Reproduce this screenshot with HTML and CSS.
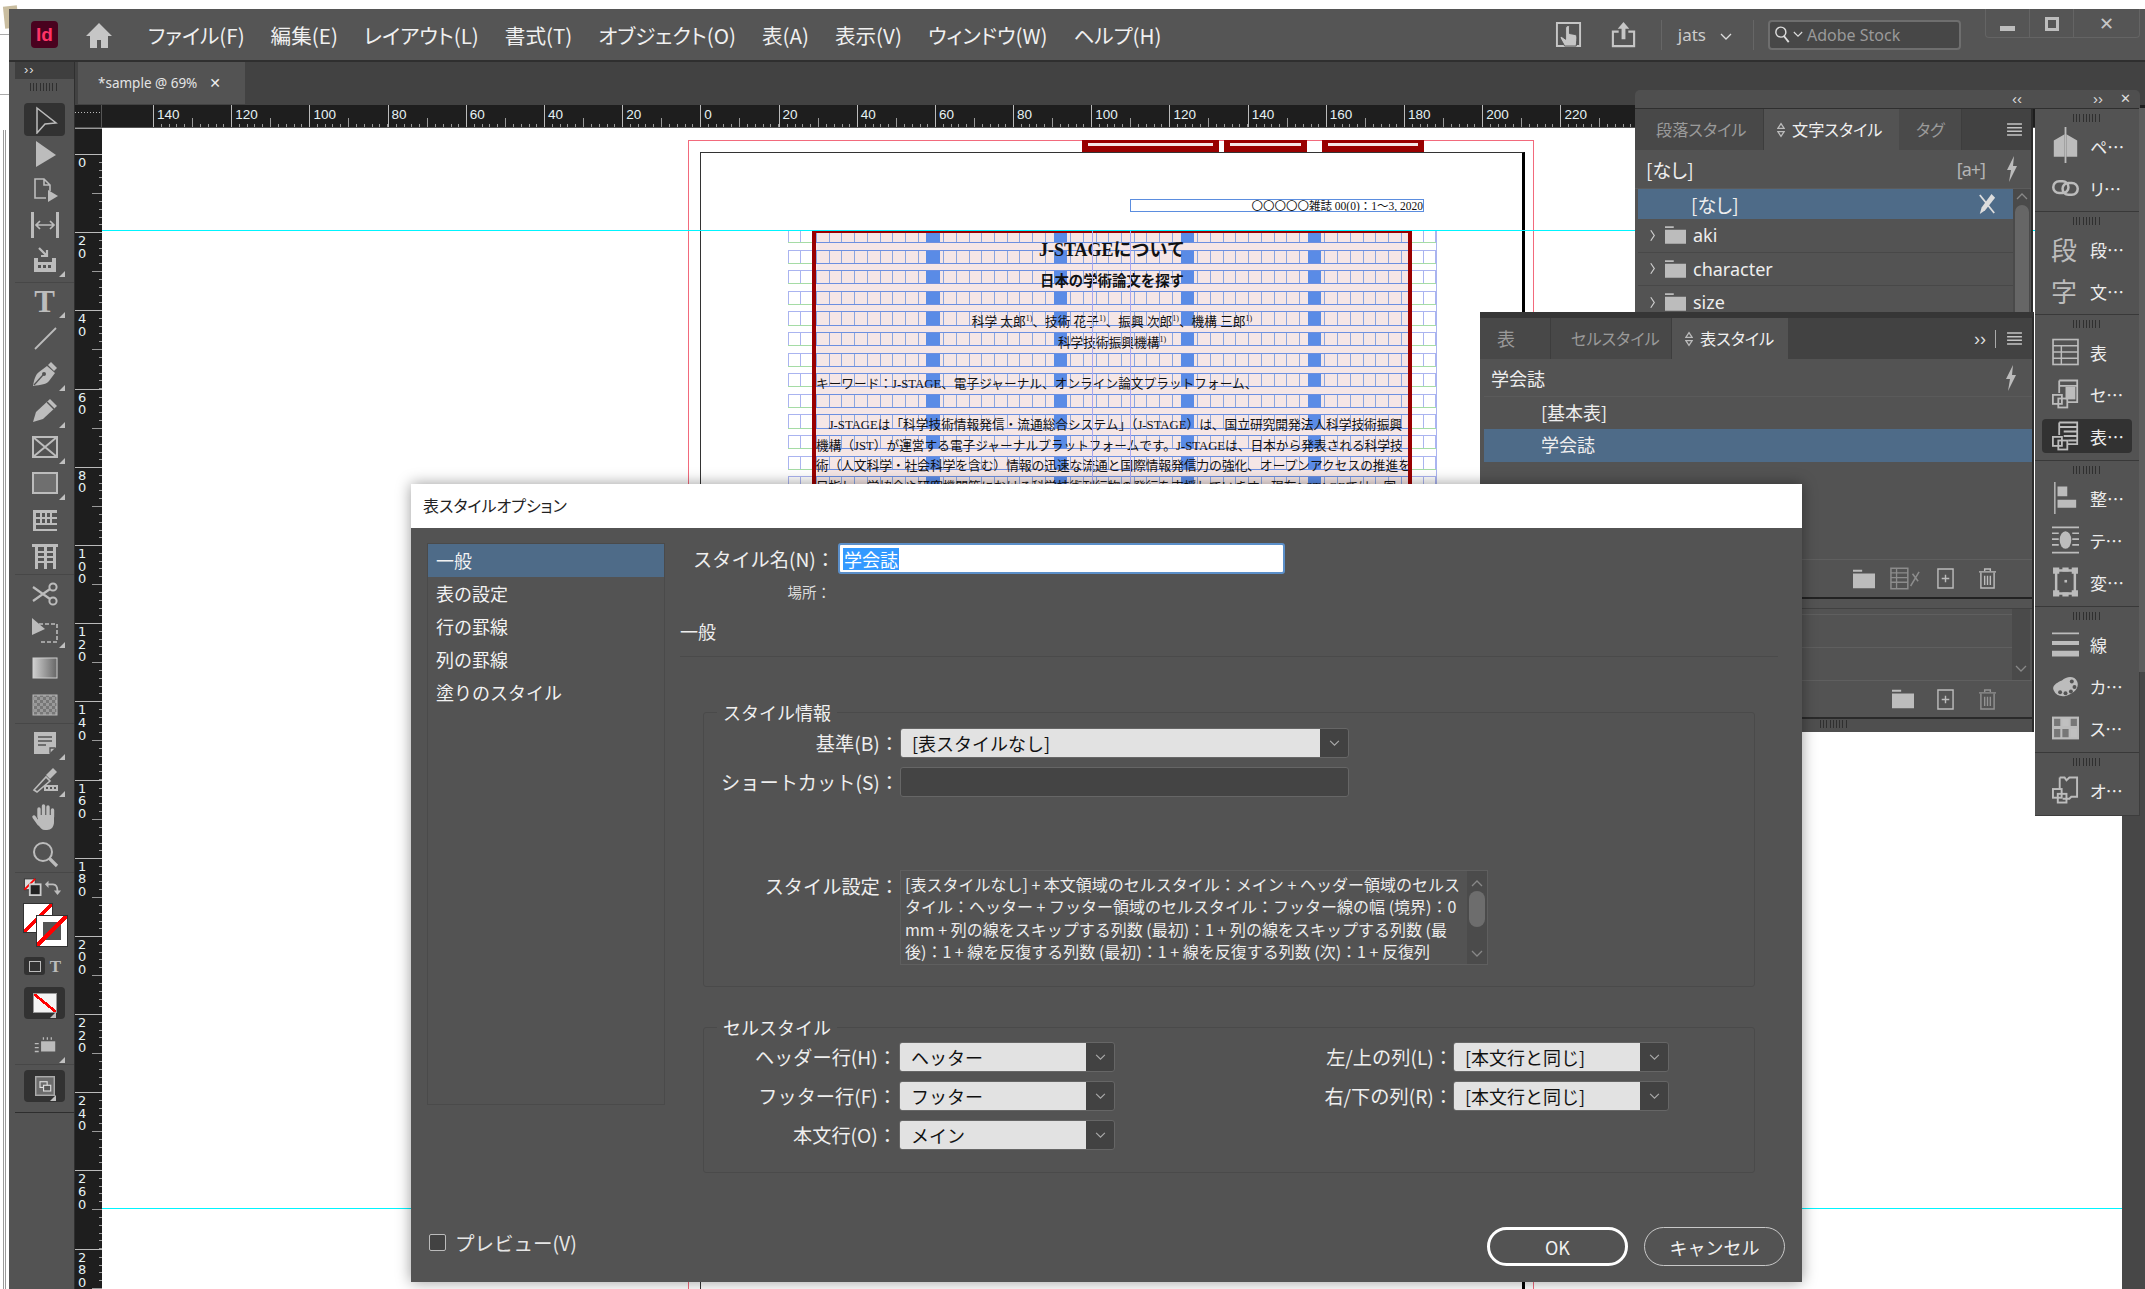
FILE: index.html
```html
<!DOCTYPE html>
<html lang="ja">
<head>
<meta charset="utf-8">
<title>表スタイルオプション</title>
<link rel="stylesheet" href="styles.css">
</head>
<body>
<svg class="sprite" xmlns="http://www.w3.org/2000/svg">
  <defs>
    <linearGradient id="grad"><stop offset="0" stop-color="#d0d0d0"/><stop offset="1" stop-color="#666"/></linearGradient>
    <pattern id="chk" width="6" height="6" patternUnits="userSpaceOnUse"><rect width="6" height="6" fill="#999"/><rect width="3" height="3" fill="#777"/><rect x="3" y="3" width="3" height="3" fill="#777"/></pattern>
  </defs>
  <symbol id="i-sel" viewBox="0 0 28 28"><path d="M6 2L25 17 14 18 6 27Z" fill="none" stroke="currentColor" stroke-width="1.5"/></symbol>
  <symbol id="i-dir" viewBox="0 0 28 28"><path d="M5 1L25 15 5 27Z" fill="currentColor"/></symbol>
  <symbol id="i-page" viewBox="0 0 28 28"><path d="M19 16v-6l-6-6H4v19h11M13 4v6h6" fill="none" stroke="currentColor" stroke-width="1.6"/><path d="M17 15l10 6-10 6z" fill="currentColor"/></symbol>
  <symbol id="i-gap" viewBox="0 0 28 28"><path d="M0 1h3v26H0zM25 1h3v26h-3z" fill="currentColor"/><path d="M5 14h18M9 10l-4 4 4 4M19 10l4 4-4 4" fill="none" stroke="currentColor" stroke-width="1.7"/></symbol>
  <symbol id="i-coll" viewBox="0 0 28 28"><path d="M3 12h4v4h14v-4h4v14H3z" fill="currentColor"/><path d="M7 19h3v3H7zM12 19h3v3h-3zM17 19h3v3h-3z" fill="#535353"/><path d="M8 2l8 8M10 10h6V4" fill="none" stroke="currentColor" stroke-width="2.2"/></symbol>
  <symbol id="i-line" viewBox="0 0 28 28"><path d="M4 25L25 4" stroke="currentColor" stroke-width="1.8"/></symbol>
  <symbol id="i-pen" viewBox="0 0 28 28"><path d="M2 26C3 19 5 14 8 12l8-6 8 7-6 8c-2 3-8 4-16 5z" fill="currentColor"/><path d="M17 5l3-3 6 6-3 3z" fill="currentColor"/><path d="M3 25l9-10" stroke="#535353" stroke-width="1.3"/><circle cx="13" cy="14" r="2" fill="#535353"/></symbol>
  <symbol id="i-pencil" viewBox="0 0 28 28"><path d="M2 26l3-10L19 3l7 7-14 13z" fill="currentColor"/><path d="M16 6l7 7" stroke="#535353" stroke-width="1.4"/></symbol>
  <symbol id="i-frame" viewBox="0 0 28 28"><path d="M2 4h24v20H2zM2 4l24 20M26 4L2 24" fill="none" stroke="currentColor" stroke-width="2"/></symbol>
  <symbol id="i-rect" viewBox="0 0 28 28"><rect x="2" y="4" width="24" height="20" fill="#6f6f6f" stroke="currentColor" stroke-width="2"/></symbol>
  <symbol id="i-tbl1" viewBox="0 0 28 28"><path d="M2 4h24v3H2zM2 11h24v2H2zM2 17h24v2H2zM2 23h24v2H2zM2 4h3v21H2z" fill="currentColor"/><path d="M10 7v4M15 7v4M20 7v4M10 13v4M15 13v4M20 13v4" stroke="currentColor" stroke-width="2"/></symbol>
  <symbol id="i-tbl2" viewBox="0 0 28 28"><path d="M1 2h26v3H1zM4 5h3v22H4zM13 5h3v22h-3zM22 5h3v22h-3z" fill="currentColor"/><path d="M7 10h6M7 15h6M7 20h6M16 10h6M16 15h6M16 20h6" stroke="currentColor" stroke-width="2"/></symbol>
  <symbol id="i-sciss" viewBox="0 0 28 28"><circle cx="22" cy="7" r="3.6" fill="none" stroke="currentColor" stroke-width="2"/><circle cx="22" cy="21" r="3.6" fill="none" stroke="currentColor" stroke-width="2"/><path d="M2 7l17 12M2 21L19 9" stroke="currentColor" stroke-width="2.2"/></symbol>
  <symbol id="i-free" viewBox="0 0 28 28"><path d="M1 1l13 11L1 18z" fill="currentColor"/><path d="M8 7h18v18H9" fill="none" stroke="currentColor" stroke-width="1.6" stroke-dasharray="4 2"/></symbol>
  <symbol id="i-grad" viewBox="0 0 28 28"><rect x="2" y="4" width="24" height="20" fill="url(#grad)" stroke="#cfcfcf" stroke-width="1"/></symbol>
  <symbol id="i-feath" viewBox="0 0 28 28"><rect x="2" y="4" width="24" height="20" fill="url(#chk)" stroke="#b5b5b5" stroke-width="1"/></symbol>
  <symbol id="i-note" viewBox="0 0 28 28"><path d="M3 3h22v15l-7 7H3z" fill="currentColor"/><path d="M7 8h14M7 12h14M7 16h8" stroke="#535353" stroke-width="1.6"/><path d="M19 24v-5h5" fill="none" stroke="#535353" stroke-width="1.3"/></symbol>
  <symbol id="i-drop" viewBox="0 0 28 28"><path d="M3 24L15 11l4 4L6 26z" fill="none" stroke="currentColor" stroke-width="1.6"/><path d="M15 9l7-7 4 4-7 7z" fill="currentColor"/><path d="M13 19h14v6H13z" fill="currentColor"/><path d="M15 21h2v2h-2zM19 21h2v2h-2zM23 21h2v2h-2z" fill="#535353"/></symbol>
  <symbol id="i-hand" viewBox="0 0 28 28"><path d="M8 14V6M12.5 12V3M17 12V4M21.5 14V7M3 14l5 7" fill="none" stroke="currentColor" stroke-width="3.4" stroke-linecap="round"/><path d="M7 12h16v7c0 5-3 8-7 8h-2c-3 0-5-2-7-6z" fill="currentColor"/></symbol>
  <symbol id="i-zoom" viewBox="0 0 28 28"><circle cx="12" cy="12" r="9" fill="none" stroke="currentColor" stroke-width="2"/><path d="M18 18l8 8" stroke="currentColor" stroke-width="3.2"/></symbol>
  <symbol id="i-swapc" viewBox="0 0 20 20"><rect x="1" y="1" width="12" height="12" fill="#ddd" stroke="#333"/><path d="M1 13L13 1" stroke="#f00" stroke-width="2"/><rect x="7" y="7" width="12" height="12" fill="#222" stroke="#ccc" stroke-width="2"/></symbol>
  <symbol id="i-swap" viewBox="0 0 20 20"><path d="M5 3l-4 4 4 4zM11 14l4 5 4-5z" fill="currentColor"/><path d="M4 7h6c4 0 5 3 5 8" fill="none" stroke="currentColor" stroke-width="2"/></symbol>
  <symbol id="i-bleed" viewBox="0 0 28 28"><rect x="9" y="8" width="18" height="13" fill="currentColor"/><path d="M12 3v3M17 3v3M22 3v3M1 11h5M1 16h5M1 21h5" stroke="currentColor" stroke-width="1.6"/></symbol>
  <symbol id="i-view" viewBox="0 0 28 28"><rect x="1" y="1" width="26" height="26" fill="#6c6c6c" stroke="#aaa" stroke-width="2"/><rect x="7" y="8" width="10" height="8" fill="none" stroke="#ddd" stroke-width="1.6"/><rect x="12" y="13" width="10" height="8" fill="#555" stroke="#ddd" stroke-width="1.6"/></symbol>
  <symbol id="i-home" viewBox="0 0 28 28"><path d="M14 2L1 15h4v12h7v-8h4v8h7V15h4z" fill="currentColor"/></symbol>
  <symbol id="i-hup" viewBox="0 0 28 28"><path d="M2 2h24v24H2z" fill="none" stroke="currentColor" stroke-width="2"/><path d="M12 6c0-2 3-2 3 0v7l6 1c2 1 2 3 1 12H10L5 17l2-1 4 3V6z" fill="currentColor" stroke="#535353" stroke-width="1"/></symbol>
  <symbol id="i-share" viewBox="0 0 28 28"><path d="M9 11H3v15h22V11h-6" fill="none" stroke="currentColor" stroke-width="2.2"/><path d="M14 1l6 7h-4v11h-4V8H8z" fill="currentColor"/></symbol>
  <symbol id="i-search" viewBox="0 0 28 28"><circle cx="11" cy="10" r="7" fill="none" stroke="currentColor" stroke-width="2"/><path d="M15 15l7 9" stroke="currentColor" stroke-width="2.6"/></symbol>
  <symbol id="i-chev" viewBox="0 0 12 8"><path d="M1 1l5 5 5-5" fill="none" stroke="currentColor" stroke-width="1.3"/></symbol>
  <symbol id="i-chevup" viewBox="0 0 12 8"><path d="M1 7l5-5 5 5" fill="none" stroke="currentColor" stroke-width="1.3"/></symbol>
  <symbol id="i-chevr" viewBox="0 0 8 14"><path d="M2 1l4 6-4 6" fill="none" stroke="currentColor" stroke-width="1.4"/></symbol>
  <symbol id="i-updown" viewBox="0 0 10 18"><path d="M5 1l4 6H1zM5 17L1 11h8z" fill="none" stroke="currentColor" stroke-width="1.6"/></symbol>
  <symbol id="i-bolt" viewBox="0 0 14 28"><path d="M9 1L2 15h4L4 27l8-16H8z" fill="currentColor"/></symbol>
  <symbol id="i-menu" viewBox="0 0 16 14"><path d="M0 1h16M0 5h16M0 9h16M0 13h16" stroke="currentColor" stroke-width="1.6"/></symbol>
  <symbol id="i-folder" viewBox="0 0 24 20"><path d="M0 4h24v16H0zM0 0h10v2H0z" fill="currentColor"/></symbol>
  <symbol id="i-clear" viewBox="0 0 20 24"><path d="M2 2l16 20" stroke="currentColor" stroke-width="2"/><path d="M15 1l4 4L8 19l-6 4 2-7z" fill="currentColor"/></symbol>
  <symbol id="i-new" viewBox="0 0 18 22"><path d="M1 1h16v20H1z" fill="none" stroke="currentColor" stroke-width="1.5"/><path d="M9 7v8M5 11h8" stroke="currentColor" stroke-width="1.5"/></symbol>
  <symbol id="i-trash" viewBox="0 0 18 22"><path d="M0 4h18M6 3V1h6v2M2 5v16h14V5M6 8v10M9 8v10M12 8v10" fill="none" stroke="currentColor" stroke-width="1.5"/></symbol>
  <symbol id="i-break" viewBox="0 0 32 24"><path d="M1 1h18v22H1z" fill="none" stroke="currentColor" stroke-width="1.6"/><path d="M1 6h18M1 11h18M1 16h18M7 1v22" stroke="currentColor" stroke-width="1.4"/><path d="M22 20L31 5M24 7l6 8" stroke="currentColor" stroke-width="1.6"/></symbol>
  <symbol id="d-page" viewBox="0 0 30 40"><path d="M14 8L2 15v18h12zM16 8l12 7v18H16z" fill="currentColor"/><path d="M15 0v40" stroke="currentColor" stroke-width="2"/></symbol>
  <symbol id="d-link" viewBox="0 0 32 22"><rect x="1.5" y="3" width="18" height="14" rx="7" fill="none" stroke="currentColor" stroke-width="3"/><rect x="12.5" y="5" width="18" height="14" rx="7" fill="none" stroke="currentColor" stroke-width="3"/></symbol>
  <symbol id="d-tbl" viewBox="0 0 26 26"><rect x="1" y="1" width="24" height="24" fill="none" stroke="currentColor" stroke-width="1.6"/><path d="M1 7h24M1 13h24M1 19h24M9 7v18" stroke="currentColor" stroke-width="1.4"/></symbol>
  <symbol id="d-cell" viewBox="0 0 30 34"><path d="M8 2h20v24H17M8 2v14M8 8h20" fill="none" stroke="currentColor" stroke-width="2"/><rect x="15" y="9" width="11" height="14" fill="currentColor"/><rect x="1" y="18" width="10" height="10" fill="none" stroke="currentColor" stroke-width="2"/><rect x="7" y="22" width="10" height="10" fill="none" stroke="currentColor" stroke-width="2"/></symbol>
  <symbol id="d-tst" viewBox="0 0 30 34"><path d="M8 2h20v24H17M8 2v14M8 7h20M13 12h15M13 17h15M18 22h10" fill="none" stroke="currentColor" stroke-width="2"/><rect x="1" y="18" width="10" height="10" fill="none" stroke="currentColor" stroke-width="2"/><rect x="7" y="22" width="10" height="10" fill="none" stroke="currentColor" stroke-width="2"/></symbol>
  <symbol id="d-align" viewBox="0 0 26 36"><path d="M1 0v36" stroke="currentColor" stroke-width="1.6"/><path d="M4 5h11v11H4zM4 20h21v9H4z" fill="currentColor"/></symbol>
  <symbol id="d-wrap" viewBox="0 0 28 28"><path d="M0 1h28M0 27h28M0 7h7M0 13h7M0 19h7M21 7h7M21 13h7M21 19h7" stroke="currentColor" stroke-width="1.8"/><ellipse cx="14" cy="14" rx="6" ry="9" fill="currentColor"/></symbol>
  <symbol id="d-trans" viewBox="0 0 26 30"><path d="M4 4h18v22H4z" fill="none" stroke="currentColor" stroke-width="2.4"/><path d="M1 1h6v6H1zM19 1h6v6h-6zM1 23h6v6H1zM19 23h6v6h-6zM10 1h6v4h-6zM10 25h6v4h-6z" fill="currentColor"/><rect x="12" y="13" width="2.5" height="2.5" fill="currentColor"/></symbol>
  <symbol id="d-stroke" viewBox="0 0 28 26"><path d="M0 1h28v2H0zM0 10h28v4H0zM0 20h28v6H0z" fill="currentColor"/></symbol>
  <symbol id="d-color" viewBox="0 0 30 26"><path d="M2 18C-1 13 6 9 11 7 16 2 25 1 28 8c3 8-5 14-13 16-6 1-11-1-13-6z" fill="currentColor"/><g fill="#535353"><circle cx="22" cy="8" r="2.2"/><circle cx="25" cy="14" r="2.2"/><circle cx="21" cy="19" r="2.2"/><circle cx="15" cy="21" r="2.2"/><circle cx="9" cy="20" r="2.2"/></g></symbol>
  <symbol id="d-swatch" viewBox="0 0 26 22"><rect width="26" height="22" fill="currentColor"/><path d="M2 2h6v7H2zM18 2h6v7h-6zM10 12h6v8h-6zM2 12h6v8H2z" fill="#777"/><path d="M10 2h6v7h-6zM18 12h6v8h-6z" fill="#c0c0c0"/></symbol>
  <symbol id="d-obj" viewBox="0 0 28 30"><path d="M8 2h5l2 3 3-3h8v20h-6l-2 2h-7" fill="none" stroke="currentColor" stroke-width="2"/><path d="M8 2v12" stroke="currentColor" stroke-width="2"/><rect x="1" y="14" width="9" height="9" fill="none" stroke="currentColor" stroke-width="2"/><rect x="6" y="19" width="9" height="9" fill="none" stroke="currentColor" stroke-width="2"/></symbol>
</svg>

<div class="behind">
  <span class="stamp"></span>
  <span class="behind-line"></span>
  <span class="behind-h one"></span>
  <span class="behind-h two"></span>
</div>

<div class="app">
  <header class="menubar">
    <div class="logo">Id</div>
    <svg class="home"><use href="#i-home"/></svg>
    <nav class="menu">
      <span>ファイル(F)</span><span>編集(E)</span><span>レイアウト(L)</span><span>書式(T)</span><span>オブジェクト(O)</span><span>表(A)</span><span>表示(V)</span><span>ウィンドウ(W)</span><span>ヘルプ(H)</span>
    </nav>
    <div class="bar-right">
      <svg class="topic"><use href="#i-hup"/></svg>
      <svg class="topic"><use href="#i-share"/></svg>
      <span class="vsep"></span>
      <span class="workspace">jats</span>
      <svg class="wchev"><use href="#i-chev"/></svg>
      <span class="vsep"></span>
      <div class="stock">
        <svg class="stock-i"><use href="#i-search"/></svg>
        <svg class="stock-c"><use href="#i-chev"/></svg>
        <span>Adobe Stock</span>
      </div>
      <div class="winbtns">
        <span class="wb"><i class="wmin"></i></span>
        <span class="wb"><i class="wmax"></i></span>
        <span class="wb wide"><span class="wclose">✕</span></span>
      </div>
    </div>
  </header>

  <div class="main">
    <aside class="toolside">
      <div class="collapse">››</div>
      <div class="grip"></div>
      <div class="toolgroup g1">
        <div class="tool on"><svg><use href="#i-sel"/></svg></div>
        <div class="tool"><svg><use href="#i-dir"/></svg></div>
        <div class="tool"><svg><use href="#i-page"/></svg></div>
        <div class="tool"><svg><use href="#i-gap"/></svg></div>
        <div class="tool fly"><svg><use href="#i-coll"/></svg></div>
      </div>
      <div class="toolgroup g2">
        <div class="tool fly"><span class="t-glyph">T</span></div>
        <div class="tool"><svg><use href="#i-line"/></svg></div>
        <div class="tool fly"><svg><use href="#i-pen"/></svg></div>
        <div class="tool fly"><svg><use href="#i-pencil"/></svg></div>
        <div class="tool fly"><svg><use href="#i-frame"/></svg></div>
        <div class="tool fly"><svg><use href="#i-rect"/></svg></div>
        <div class="tool"><svg><use href="#i-tbl1"/></svg></div>
        <div class="tool"><svg><use href="#i-tbl2"/></svg></div>
      </div>
      <div class="toolgroup g3">
        <div class="tool"><svg><use href="#i-sciss"/></svg></div>
        <div class="tool fly"><svg><use href="#i-free"/></svg></div>
        <div class="tool"><svg><use href="#i-grad"/></svg></div>
        <div class="tool"><svg><use href="#i-feath"/></svg></div>
      </div>
      <div class="toolgroup g3">
        <div class="tool fly"><svg><use href="#i-note"/></svg></div>
        <div class="tool fly"><svg><use href="#i-drop"/></svg></div>
        <div class="tool"><svg><use href="#i-hand"/></svg></div>
        <div class="tool"><svg><use href="#i-zoom"/></svg></div>
      </div>
      <div class="colors">
        <div class="swaprow">
          <svg class="swapc"><use href="#i-swapc"/></svg>
          <svg class="swap"><use href="#i-swap"/></svg>
        </div>
        <div class="fillstroke">
          <span class="fillbox"></span>
          <span class="strokebox"></span>
        </div>
        <div class="containerrow">
          <span class="ctn"><i></i></span>
          <span class="t-small">T</span>
        </div>
        <div class="applybox fly"><span class="applyswatch"></span></div>
        <div class="tool fly bleedtool"><svg><use href="#i-bleed"/></svg></div>
      </div>
      <div class="viewgroup">
        <div class="applybox fly view"><svg><use href="#i-view"/></svg></div>
      </div>
    </aside>

    <div class="doc">
      <div class="tabbar">
        <div class="tab"><span>*sample @ 69%</span><b>✕</b></div>
      </div>
      <div class="hruler">
        <div class="corner"></div>
        <div class="hticks">
          <span>140</span><span>120</span><span>100</span><span>80</span><span>60</span><span>40</span><span>20</span><span>0</span><span>20</span><span>40</span><span>60</span><span>80</span><span>100</span><span>120</span><span>140</span><span>160</span><span>180</span><span>200</span><span>220</span>
        </div>
      </div>
      <div class="docbody">
        <div class="vruler">
          <span>0</span><span>20</span><span>40</span><span>60</span><span>80</span><span>100</span><span>120</span><span>140</span><span>160</span><span>180</span><span>200</span><span>220</span><span>240</span><span>260</span><span>280</span>
        </div>
        <div class="canvas">
          <div class="bleed"></div>
          <div class="pageframe"></div>
          <div class="runhead rh1"><i></i></div>
          <div class="runhead rh2"><i></i></div>
          <div class="runhead rh3"><i></i></div>
          <div class="headframe">〇〇〇〇〇雑誌 00(0)：1～3, 2020</div>
          <div class="gridside left"></div>
          <div class="gridside right"></div>
          <div class="tbl">
            <div class="ln title">J-STAGEについて</div>
            <div class="ln subtitle">日本の学術論文を探す</div>
            <div class="ln c gap2">科学 太郎<sup>1)</sup>、技術 花子<sup>1)</sup>、振興 次郎<sup>1)</sup>、機構 三郎<sup>1)</sup></div>
            <div class="ln c">科学技術振興機構<sup>1)</sup></div>
            <div class="ln gap2">キーワード：J-STAGE、電子ジャーナル、オンライン論文プラットフォーム、</div>
            <div class="ln gap2">　J-STAGEは「科学技術情報発信・流通総合システム」（J-STAGE）は、国立研究開発法人科学技術振興</div>
            <div class="ln">機構（JST）が運営する電子ジャーナルプラットフォームです。J-STAGEは、日本から発表される科学技</div>
            <div class="ln">術（人文科学・社会科学を含む）情報の迅速な流通と国際情報発信力の強化、オープンアクセスの推進を</div>
            <div class="ln">目指し、学協会や研究機関等における科学技術刊行物の発行を支援しています。現在J-STAGEでは、国</div>
          </div>
          <div class="colguide a"></div>
          <div class="colguide b"></div>
          <div class="guide top"></div>
          <div class="guide bottom"></div>
        </div>
        <div class="canvasbar"></div>
      </div>
    </div>
  </div>
</div>

<!-- floating panels -->
<div class="floathead">
  <span class="fh-l">‹‹</span>
  <span class="fh-r">››</span>
  <span class="fh-x">✕</span>
</div>

<section class="panel p1">
  <div class="ptabs">
    <div class="ptab p1a">段落スタイル</div>
    <div class="ptab active p1b"><svg class="updown"><use href="#i-updown"/></svg>文字スタイル</div>
    <div class="ptab p1c">タグ</div>
    <div class="ptab-rest"><svg class="pmenu"><use href="#i-menu"/></svg></div>
  </div>
  <div class="phead">
    <span>[なし]</span>
    <span class="ph-icons"><span class="aplus">[a+]</span><svg class="bolt"><use href="#i-bolt"/></svg></span>
  </div>
  <div class="plist-wrap">
    <div class="plist">
      <div class="prow sel"><span class="indent">[なし]</span><svg class="clear"><use href="#i-clear"/></svg></div>
      <div class="prow"><svg class="tw"><use href="#i-chevr"/></svg><svg class="fold"><use href="#i-folder"/></svg>aki</div>
      <div class="prow"><svg class="tw"><use href="#i-chevr"/></svg><svg class="fold"><use href="#i-folder"/></svg>character</div>
      <div class="prow"><svg class="tw"><use href="#i-chevr"/></svg><svg class="fold"><use href="#i-folder"/></svg>size</div>
    </div>
    <div class="pscroll"><svg class="sc-up"><use href="#i-chevup"/></svg><span class="sc-thumb"></span></div>
  </div>
</section>

<section class="panel p2">
  <div class="ptabs">
    <div class="ptab p2a">表</div>
    <div class="ptab p2b">セルスタイル</div>
    <div class="ptab active p2c"><svg class="updown"><use href="#i-updown"/></svg>表スタイル</div>
    <div class="ptab-rest r2">
      <span class="more">››</span><span class="morebar"></span><svg class="pmenu"><use href="#i-menu"/></svg>
    </div>
  </div>
  <div class="phead h2">
    <span>学会誌</span>
    <svg class="bolt"><use href="#i-bolt"/></svg>
  </div>
  <div class="rows2">
    <div class="prow2">[基本表]</div>
    <div class="prow2 sel">学会誌</div>
  </div>
  <div class="pfoot">
    <svg class="f-fold"><use href="#i-folder"/></svg>
    <svg class="f-break"><use href="#i-break"/></svg>
    <svg class="f-new"><use href="#i-new"/></svg>
    <svg class="f-trash"><use href="#i-trash"/></svg>
  </div>
  <div class="subpanel">
    <div class="subtop"></div>
    <div class="sublist">
      <div class="subrows"><i></i><i></i></div>
      <div class="subscroll"><svg><use href="#i-chev"/></svg></div>
    </div>
    <div class="pfoot small">
      <svg class="f-fold"><use href="#i-folder"/></svg>
      <svg class="f-new"><use href="#i-new"/></svg>
      <svg class="f-trash dim"><use href="#i-trash"/></svg>
    </div>
  </div>
  <div class="gripstrip"><div class="grip g-strip"></div></div>
</section>

<aside class="dock">
  <div class="dsec s2">
    <div class="grip"></div>
    <div class="ditem"><svg class="di page"><use href="#d-page"/></svg><span>ペ…</span></div>
    <div class="ditem"><svg class="di link"><use href="#d-link"/></svg><span>リ…</span></div>
  </div>
  <div class="dsec s2">
    <div class="grip"></div>
    <div class="ditem"><b class="dglyph">段</b><span>段…</span></div>
    <div class="ditem"><b class="dglyph">字</b><span>文…</span></div>
  </div>
  <div class="dsec">
    <div class="grip"></div>
    <div class="ditem"><svg class="di"><use href="#d-tbl"/></svg><span>表</span></div>
    <div class="ditem"><svg class="di"><use href="#d-cell"/></svg><span>セ…</span></div>
    <div class="ditem on"><svg class="di"><use href="#d-tst"/></svg><span>表…</span></div>
  </div>
  <div class="dsec">
    <div class="grip"></div>
    <div class="ditem"><svg class="di"><use href="#d-align"/></svg><span>整…</span></div>
    <div class="ditem"><svg class="di"><use href="#d-wrap"/></svg><span>テ…</span></div>
    <div class="ditem"><svg class="di"><use href="#d-trans"/></svg><span>変…</span></div>
  </div>
  <div class="dsec">
    <div class="grip"></div>
    <div class="ditem"><svg class="di"><use href="#d-stroke"/></svg><span>線</span></div>
    <div class="ditem"><svg class="di"><use href="#d-color"/></svg><span>カ…</span></div>
    <div class="ditem"><svg class="di"><use href="#d-swatch"/></svg><span>ス…</span></div>
  </div>
  <div class="dsec last">
    <div class="grip"></div>
    <div class="ditem"><svg class="di"><use href="#d-obj"/></svg><span>オ…</span></div>
  </div>
</aside>
<div class="dockedge"></div>

<div class="dialog">
  <div class="dlg-title">表スタイルオプション</div>
  <div class="dlg-body">
    <ul class="side">
      <li class="on">一般</li>
      <li>表の設定</li>
      <li>行の罫線</li>
      <li>列の罫線</li>
      <li>塗りのスタイル</li>
    </ul>
    <div class="form">
      <div class="namerow">
        <label>スタイル名(N)：</label>
        <div class="nameinput"><span class="selected">学会誌</span></div>
      </div>
      <div class="placerow"><label>場所：</label></div>
      <h2 class="sect">一般</h2>
      <div class="group g-info">
        <div class="legend">スタイル情報</div>
        <div class="inforow">
          <label>基準(B)：</label>
          <div class="select wide"><span class="val">[表スタイルなし]</span><span class="arrow"><svg><use href="#i-chev"/></svg></span></div>
        </div>
        <div class="inforow">
          <label>ショートカット(S)：</label>
          <div class="shortcut"></div>
        </div>
        <div class="inforow descrow">
          <label>スタイル設定：</label>
          <div class="desc">
            <p>[表スタイルなし] + 本文領域のセルスタイル：メイン + ヘッダー領域のセルス<br>タイル：ヘッター + フッター領域のセルスタイル：フッター線の幅 (境界)：0<br>mm + 列の線をスキップする列数 (最初)：1 + 列の線をスキップする列数 (最<br>後)：1 + 線を反復する列数 (最初)：1 + 線を反復する列数 (次)：1 + 反復列</p>
            <div class="descbar"><svg><use href="#i-chevup"/></svg><span class="thumb"></span><svg><use href="#i-chev"/></svg></div>
          </div>
        </div>
      </div>
      <div class="group g-cell">
        <div class="legend">セルスタイル</div>
        <div class="cellgrid">
          <label>ヘッダー行(H)：</label>
          <div class="select"><span class="val">ヘッター</span><span class="arrow"><svg><use href="#i-chev"/></svg></span></div>
          <label class="lr">左/上の列(L)：</label>
          <div class="select"><span class="val">[本文行と同じ]</span><span class="arrow"><svg><use href="#i-chev"/></svg></span></div>
          <label>フッター行(F)：</label>
          <div class="select"><span class="val">フッター</span><span class="arrow"><svg><use href="#i-chev"/></svg></span></div>
          <label class="lr">右/下の列(R)：</label>
          <div class="select"><span class="val">[本文行と同じ]</span><span class="arrow"><svg><use href="#i-chev"/></svg></span></div>
          <label>本文行(O)：</label>
          <div class="select"><span class="val">メイン</span><span class="arrow"><svg><use href="#i-chev"/></svg></span></div>
        </div>
      </div>
    </div>
  </div>
  <div class="dlg-foot">
    <div class="preview"><span class="check"></span><span>プレビュー(V)</span></div>
    <div class="btns">
      <button class="btn primary">OK</button>
      <button class="btn">キャンセル</button>
    </div>
  </div>
</div>
</body>
</html>
```

FILE: styles.css
```css
* { box-sizing: border-box; }
html, body { margin: 0; padding: 0; }
body {
  width: 2145px; height: 1289px; overflow: hidden; position: relative;
  background: #fff;
  font-family: "Noto Sans CJK JP", "Noto Sans", sans-serif;
  font-feature-settings: "palt";
  color: #eee;
}
.sprite { position: absolute; width: 0; height: 0; }
svg { display: block; }

/* behind the window */
.behind { position: absolute; inset: 0; }
.stamp { position: absolute; left: 4px; top: 6px; width: 14px; height: 22px; background: #c9bd9f; transform: rotate(-6deg); }
.behind-line { position: absolute; left: 3px; top: 130px; bottom: 0; width: 3px; border-left: 1px solid #999; border-right: 1px solid #999; }
.behind-h { position: absolute; left: 0; width: 9px; height: 1px; background: #aaa; }
.behind-h.one { top: 34px; }
.behind-h.two { top: 94px; }

/* window */
.app { position: absolute; left: 9px; top: 9px; right: 0; bottom: 0; display: flex; flex-direction: column; background: #535353; border-radius: 3px 0 0 0; }
.menubar { height: 51px; flex: none; display: flex; align-items: center; background: #555; padding-left: 22px; padding-right: 5px; }
.logo { width: 27px; height: 27px; border-radius: 4px; background: #49021f; color: #ff3366; font: bold 19px/27px "Liberation Sans", sans-serif; text-align: center; }
.home { width: 28px; height: 28px; margin-left: 27px; color: #c6c6c6; }
.menu { display: flex; gap: 26px; margin-left: 35px; font-size: 20.6px; color: #f0f0f0; white-space: nowrap; line-height: 24px; }
.bar-right { margin-left: auto; display: flex; align-items: center; height: 100%; }
.topic { width: 27px; height: 27px; color: #c6c6c6; margin-right: 28px; }
.topic + .topic { margin-right: 24px; }
.vsep { width: 1px; height: 30px; background: #666; }
.workspace { margin-left: 16px; font-size: 17px; color: #ccc; font-family: "Noto Sans", sans-serif; }
.wchev { width: 12px; height: 8px; margin: 5px 21px 0 14px; color: #ddd; }
.stock { width: 193px; height: 30px; margin-left: 14px; background: #474747; border: 2px solid #6e6e6e; border-radius: 4px; display: flex; align-items: center; padding-left: 3px; color: #9a9a9a; font-size: 16px; font-family: "Noto Sans", sans-serif; }
.stock-i { width: 20px; height: 20px; color: #ddd; }
.stock-c { width: 10px; height: 7px; color: #ddd; margin: 0 4px 0 0; }
.winbtns { display: flex; margin-left: 24px; height: 29px; align-self: flex-start; border: 1px solid #646464; border-top: 0; border-radius: 0 0 4px 4px; }
.wb { width: 44px; display: flex; align-items: center; justify-content: center; border-right: 1px solid #646464; }
.wb.wide { width: 65px; border-right: 0; }
.wmin { display: block; width: 15px; height: 5px; margin-top: 10px; background: #bdbdbd; }
.wmax { display: block; width: 14px; height: 14px; margin-top: 2px; border: 3px solid #bdbdbd; }
.wclose { color: #c6c6c6; font: bold 18px "DejaVu Sans", sans-serif; }

.main { flex: 1; min-height: 0; display: flex; background: #2f2f2f; padding-top: 2px; }

/* tools */
.toolside { width: 66px; flex: none; padding-left: 6px; padding-right: 0; background: #535353; border-right: 1px solid #2f2f2f; display: flex; flex-direction: column; }
.collapse { height: 17px; background: #3f3f3f; color: #ddd; font: 13px/15px "Liberation Sans", sans-serif; padding-left: 9px; letter-spacing: 1px; margin-right: 0; }
.grip { height: 8px; width: 29px; margin: 0 auto; background: repeating-linear-gradient(90deg, #2f2f2f 0 1px, transparent 1px 3.2px); flex: none; }
.toolside > .grip { margin-top: 4px; margin-bottom: 12px; }
.toolgroup { border-bottom: 1px solid #474747; display: flex; flex-direction: column; flex: none; }
.tool { height: 36px; position: relative; display: flex; align-items: center; justify-content: center; color: #bcbcbc; flex: none; }
.g1 .tool { height: 35.5px; }
.g2 .tool { height: 36.4px; }
.g3 .tool { height: 37px; }
.tool svg { width: 28px; height: 28px; }
.tool.on { margin: 0 9px; height: 33px; background: #323232; border-radius: 4px; }
.g1 { padding-top: 0; height: 180px; }
.t-glyph { font: bold 31px/1 "Liberation Serif", serif; color: #bcbcbc; }
.fly::after { content: ""; position: absolute; right: 9px; bottom: 1px; border-style: solid; border-width: 0 0 6px 6px; border-color: transparent transparent #c0c0c0 transparent; }

.colors { display: flex; flex-direction: column; flex: none; border-bottom: 1px solid #474747; padding-bottom: 0; }
.swaprow { display: flex; justify-content: space-between; padding: 5px 12px 0 8px; height: 25px; color: #bcbcbc; }
.swapc { width: 19px; height: 18px; }
.swap { width: 18px; height: 18px; }
.fillstroke { height: 44px; position: relative; margin-top: 5px; }
.fillbox { position: absolute; left: 8px; top: 0; width: 30px; height: 30px; background: linear-gradient(to top left, #fff 46%, #f00 46% 54%, #fff 54%); border: 1px solid #333; }
.strokebox { position: absolute; left: 22px; top: 13px; width: 30px; height: 30px; border: 6px solid #fff; background: #555; outline: 1px solid #333; }
.strokebox::after { content: ""; position: absolute; inset: -6px; background: linear-gradient(to top left, transparent 45%, #f00 45% 55%, transparent 55%); }
.containerrow { height: 24px; margin-top: 7px; display: flex; align-items: center; justify-content: space-between; padding: 0 13px 0 9px; }
.ctn { width: 21px; height: 18px; background: #323232; border-radius: 3px; display: flex; align-items: center; justify-content: center; }
.ctn i { display: block; width: 12px; height: 11px; border: 1.5px solid #bcbcbc; }
.t-small { font: bold 17px/1 "Liberation Serif", serif; color: #bcbcbc; }
.applybox { margin: 9px 9px 0; height: 32px; background: #323232; border-radius: 4px; position: relative; display: flex; align-items: center; justify-content: center; flex: none; }
.applyswatch { width: 24px; height: 20px; background: linear-gradient(to top right, #f4f4f4 45%, #f00 45% 55%, #f4f4f4 55%); border: 1px solid #999; }
.bleedtool { margin-top: 9px; height: 36px; }
.bleedtool svg { width: 22px; height: 22px; }
.viewgroup { padding-top: 5px; height: 48px; border-bottom: 1px solid #2e2e2e; flex: none; }
.viewgroup .applybox { margin-top: 0; color: #aaa; }
.viewgroup svg { width: 20px; height: 20px; }

/* doc */
.doc { flex: 1; min-width: 0; display: flex; flex-direction: column; background: #2f2f2f; }
.tabbar { height: 43px; flex: none; background: #424242; padding-left: 3px; }
.tab { width: 167px; height: 42px; background: #535353; display: flex; align-items: center; padding-left: 20px; gap: 12px; }
.tab span { font: 13.5px "Noto Sans", sans-serif; color: #e4e4e4; white-space: nowrap; }
.tab b { font: bold 14px "DejaVu Sans", sans-serif; color: #eee; }
.hruler { height: 23px; flex: none; display: flex; background: #1e1e1e; border-bottom: 1px solid #555; }
.corner { width: 27px; flex: none; background-image: radial-gradient(#bbb 0.5px, transparent 0.8px); background-size: 3px 3px; background-position: 8px 6px; background-repeat: repeat-x; border-right: 1px solid #555; }
.hticks { flex: 1; display: flex; padding-left: 51px; overflow: hidden; }
.hticks span {
  width: 78.2px; flex: none; height: 22px; padding-left: 3px;
  border-left: 1px solid #bbb;
  font: 13.5px/19px "Liberation Sans", sans-serif; color: #e6f2f4; letter-spacing: 0;
  background-image: linear-gradient(#999, #999), repeating-linear-gradient(90deg, transparent 0 6.8px, #999 6.8px 7.82px);
  background-size: 1px 9px, 100% 3px;
  background-position: 38px 100%, 0 100%;
  background-repeat: no-repeat;
}
.docbody { flex: 1; min-height: 0; display: flex; }
.vruler { width: 27px; flex: none; background: #1e1e1e; padding-top: 25px; overflow: hidden; border-top: 1px solid #999; display: flex; flex-direction: column; }
.vruler span {
  height: 78.2px; flex: none; display: block; width: 27px; padding: 2px 14px 0 3px;
  border-top: 1px solid #bbb;
  font: 13px/12.6px "DejaVu Sans", sans-serif; color: #e6f2f4; word-break: break-all;
  background-image: linear-gradient(#999, #999), repeating-linear-gradient(180deg, transparent 0 6.8px, #999 6.8px 7.82px);
  background-size: 10px 1px, 3px 100%;
  background-position: 100% 38px, 100% 0;
  background-repeat: no-repeat;
}
.canvas { flex: 1; min-width: 0; position: relative; background: #fff; overflow: hidden; }
.canvasbar { width: 23px; flex: none; background: #474747; }

/* page on the canvas */
.bleed { position: absolute; left: 586px; top: 12px; width: 846px; bottom: -10px; border: 1px solid #f26a7c; border-bottom: 0; }
.pageframe { position: absolute; left: 598px; top: 24px; width: 825px; bottom: -10px; border-top: 1px solid #333; border-left: 1px solid #333; border-right: 3px solid #000; background: #fff; }
.runhead { position: absolute; top: 12px; height: 12px; background: #990000; padding: 3px 6px 0; }
.runhead i { display: block; height: 3px; background: #f5e6e6; }
.rh1 { left: 980px; width: 137px; }
.rh2 { left: 1122px; width: 83px; }
.rh3 { left: 1220px; width: 102px; }
.headframe { position: absolute; left: 1028px; top: 71px; width: 294px; height: 13px; border: 1px solid #5b8ddf; font: 11.5px/12px "Liberation Serif", "Noto Sans CJK JP", serif; color: #111; text-align: right; white-space: nowrap; overflow: hidden; }
.gridside { position: absolute; top: 102px; width: 24px; height: 280px;
  background-image: repeating-linear-gradient(180deg, transparent 0 12.2px, #a5dca5 12.2px 13.2px, #fff 13.2px 19.6px, #aab4f0 19.6px 20.6px), repeating-linear-gradient(90deg, #aab4f0 0 1px, transparent 1px 12px);
}
.gridside.left { left: 686px; }
.gridside.right { left: 1309px; width: 26px; border-right: 1px solid #aab4f0; }
.tbl {
  position: absolute; left: 710px; top: 102px; width: 600px; height: 300px;
  border: 4px solid #990000; border-top-width: 3px; padding: 4px 0 0 0;
  overflow: hidden; display: flex; flex-direction: column;
  background-color: #f5e6e6;
  background-image:
    repeating-linear-gradient(180deg, transparent 0 9.2px, #6c8fe0 9.2px 10.2px, #f5e6e6 10.2px 16.6px, #6c8fe0 16.6px 17.6px, transparent 17.6px 20.6px),
    repeating-linear-gradient(90deg, transparent 0 110.4px, #5a8be6 110.4px 123.9px, transparent 123.9px 127.1px),
    repeating-linear-gradient(90deg, #8aa5e0 0 1px, transparent 1px 12.71px);
  font-family: "Liberation Serif", "Noto Sans CJK JP", serif;
  color: #111;
}
.ln { height: 20.6px; line-height: 20.6px; font-size: 12.7px; white-space: nowrap; flex: none; font-feature-settings: normal; }
.ln sup { font-size: 8px; line-height: 0; }
.ln.c { text-align: center; }
.ln.title { font-size: 18px; font-weight: bold; text-align: center; margin-top: 3px; }
.ln.subtitle { font-size: 14.4px; font-weight: bold; text-align: center; margin-top: 10.4px; }
.ln.gap2 { margin-top: 20.6px; }
.colguide { position: absolute; top: 102px; width: 1px; height: 300px; background: #a6a6f0; }
.colguide.a { left: 990px; }
.colguide.b { left: 1028px; }
.guide { position: absolute; left: 0; right: 0; height: 1px; background: #00f5ff; }
.guide.top { top: 102px; }
.guide.bottom { top: 1080px; }

/* floating panels */
.floathead { position: absolute; left: 1635px; top: 90px; width: 505px; height: 19px; background: #4f4f4f; border-radius: 5px 5px 0 0; border-bottom: 1px solid #2f2f2f; color: #ddd; font: 15px/17px "Liberation Sans", sans-serif; }
.fh-l { position: absolute; left: 377px; }
.fh-r { position: absolute; left: 458px; }
.fh-x { position: absolute; left: 485px; font: bold 13px/17px "DejaVu Sans", sans-serif; }
.panel { position: absolute; background: #535353; display: flex; flex-direction: column; }
.p1 { left: 1635px; top: 109px; width: 398px; height: 205px; border-right: 2px solid #2c2c2c; }
.p2 { left: 1480px; top: 312px; width: 554px; height: 420px; border-top: 6px solid #363636; border-right: 2px solid #2c2c2c; }
.ptabs { height: 41px; display: flex; background: #424242; flex: none; font-size: 16.2px; line-height: 41px; white-space: nowrap; }
.ptab { background: #484848; color: #9a9a9a; border-right: 1px solid #3d3d3d; padding-left: 21px; display: flex; align-items: center; }
.ptab.active { background: #535353; color: #f0f0f0; border-right: 0; padding-left: 13px; }
.updown { width: 8px; height: 16px; margin-right: 7px; color: #bbb; flex: none; }
.p1a { width: 129px; }
.p1b { width: 135px; }
.p1c { width: 63px; padding-left: 17px; background: #4a4a4a; }
.ptab-rest { flex: 1; display: flex; align-items: center; justify-content: flex-end; padding-right: 9px; }
.pmenu { width: 15px; height: 13px; color: #c4c4c4; flex: none; }
.p2a { width: 71px; padding-left: 17px; font-size: 18px; }
.p2b { width: 121px; padding-left: 20px; }
.p2c { width: 116px; }
.r2 { padding-right: 10px; }
.more { color: #ddd; font: 18px/1 "Liberation Sans", sans-serif; margin-right: 9px; }
.morebar { width: 1px; height: 18px; background: #aaa; margin-right: 11px; }
.phead { height: 39px; display: flex; align-items: center; justify-content: space-between; padding: 0 12px 0 11px; font-size: 19px; border-bottom: 1px solid #5c5c5c; flex: none; }
.ph-icons { display: flex; align-items: center; gap: 20px; }
.aplus { font: 18px "Noto Sans", sans-serif; color: #b4b4b4; letter-spacing: -1px; }
.bolt { width: 14px; height: 28px; color: #bcbcbc; flex: none; }
.plist-wrap { flex: 1; display: flex; padding-left: 3px; min-height: 0; overflow: hidden; }
.plist { width: 375px; flex: none; }
.prow { height: 33.5px; display: flex; align-items: center; font-size: 18px; font-family: "Noto Sans", "Noto Sans CJK JP", sans-serif; border-bottom: 1px solid #484848; padding-left: 11px; }
.prow.sel { height: 30px; background: #4e6b88; font-family: "Noto Sans CJK JP", sans-serif; font-size: 19px; justify-content: space-between; padding-right: 17px; padding-left: 53px; border: 0; }
.clear { width: 18px; height: 22px; color: #ddd; }
.tw { width: 7px; height: 13px; color: #ccc; flex: none; }
.fold { width: 21px; height: 20px; color: #bcbcbc; margin: 0 7px 0 9px; flex: none; }
.pscroll { flex: 1; background: #4a4a4a; display: flex; flex-direction: column; align-items: center; margin-right: 1px; }
.sc-up { width: 12px; height: 8px; margin: 3px 0 5px; color: #888; }
.sc-thumb { width: 14px; flex: 1; background: #666; border-radius: 7px 7px 0 0; }
.h2 { height: 37px; padding-right: 14px; border-bottom: 0; font-size: 18px; }
.rows2 { flex: none; height: 163px; border-top: 1px solid #5a5a5a; margin: 0 0 0 4px; }
.prow2 { height: 32px; padding-left: 57px; font-size: 18px; line-height: 31px; }
.prow2.sel { background: #4e6b88; height: 33px; }
.pfoot { height: 38px; flex: none; border-top: 1px solid #5f5f5f; display: flex; align-items: center; justify-content: flex-end; padding-right: 36px; color: #bcbcbc; gap: 0; border-bottom: 0; }
.pfoot svg { flex: none; }
.f-fold { width: 22px; height: 20px; margin-right: 15px; }
.f-break { width: 30px; height: 23px; margin-right: 17px; opacity: .55; }
.f-new { width: 17px; height: 21px; margin-right: 25px; }
.f-trash { width: 17px; height: 21px; }
.f-trash.dim { opacity: .6; }
.subpanel { flex: none; height: 122px; border-top: 2px solid #222; display: flex; flex-direction: column; border-bottom: 2px solid #2a2a2a; }
.subtop { height: 10px; flex: none; border-bottom: 1px solid #414141; }
.sublist { height: 72px; flex: none; display: flex; border-bottom: 1px solid #5f5f5f; }
.subrows { flex: 1; padding-top: 5px; }
.subrows i { display: block; height: 33px; border-top: 1px solid #5f5f5f; }
.subscroll { width: 18px; margin-right: 2px; background: #4a4a4a; display: flex; align-items: flex-end; justify-content: center; color: #888; padding-bottom: 7px; }
.subscroll svg { width: 12px; height: 8px; }
.pfoot.small { height: 36px; border: 0; }
.pfoot.small .f-fold { margin-right: 23px; }
.gripstrip { flex: 1; background: #4f4f4f; padding-top: 1px; }
.g-strip { margin: 0 0 0 340px; }

.dockedge { position: absolute; left: 2139px; top: 108px; width: 6px; height: 564px; background: #5d5d5d; }
.dock { position: absolute; left: 2035px; top: 109px; width: 105px; height: 707px; display: flex; flex-direction: column; background: #535353; border-right: 1px solid #3d3d3d; border-bottom: 1px solid #3d3d3d; }
.dsec { flex: none; height: 146px; border-bottom: 1px solid #393939; padding-top: 5px; }
.dsec.s2 { height: 103px; }
.dsec.last { height: 62px; border: 0; }
.ditem { height: 42px; margin: 0 7px; display: flex; align-items: center; position: relative; color: #bcbcbc; font-size: 17px; }
.dsec .grip { margin: 0 auto 3px; }
.ditem span { position: absolute; left: 48px; color: #ececec; white-space: nowrap; }
.ditem.on { background: #323232; border-radius: 4px; height: 34px; margin-top: 4px; }
.di { position: absolute; left: 10px; top: 5px; width: 27px; height: 32px; }
.ditem.on .di { top: 1px; }
.di.page { top: 0; height: 40px; }
.dglyph { position: absolute; left: 9px; font-size: 26px; font-weight: normal; line-height: 42px; color: #bcbcbc; }

/* dialog */
.dialog { position: absolute; left: 411px; top: 484px; width: 1391px; height: 798px; background: #535353; box-shadow: 0 0 14px rgba(0,0,0,.4); display: flex; flex-direction: column; }
.dlg-title { height: 44px; background: #fff; color: #222; font-size: 16px; line-height: 43px; padding-left: 12px; flex: none; }
.dlg-body { flex: 1; min-height: 0; display: flex; padding: 15px 0 0 16px; font-feature-settings: normal; }
.side { list-style: none; margin: 0; padding: 0; width: 238px; height: 562px; border: 1px solid #4a4a4a; font-size: 18px; flex: none; }
.side li { height: 33px; line-height: 32px; padding-left: 8px; color: #f2f2f2; }
.side li.on { background: #4e6b88; }
.form { margin-left: 15px; width: 1098px; flex: none; }
.namerow { display: flex; align-items: center; height: 31px; }
.namerow label { width: 155px; text-align: right; font-size: 19.2px; white-space: nowrap; }
.nameinput { margin-left: 3px; width: 447px; height: 31px; background: #fff; border: 2px solid #5b8fc9; border-radius: 3px; padding: 3px 3px; display: flex; align-items: stretch; }
.selected { background: #3399ff; color: #fff; font-size: 18px; line-height: 22px; padding: 0 1px; height: 22px; }
.placerow { margin-top: 6px; height: 24px; line-height: 24px; width: 151px; text-align: right; font-size: 14.5px; color: #ddd; }
.sect { margin: 15px 0 0; font-size: 18px; font-weight: normal; line-height: 24px; height: 38px; border-bottom: 1px solid #4a4a4a; color: #eee; }
.group { margin-left: 23px; width: 1052px; border: 1px solid #4a4a4a; border-radius: 3px; }
.legend { width: fit-content; margin: -13px 0 0 13px; padding: 0 6px; font-size: 18px; line-height: 24px; background: #535353; color: #f0f0f0; height: 24px; }
.g-info { margin-top: 55px; height: 275px; }
.g-cell { margin-top: 40px; height: 146px; }
.inforow { display: flex; align-items: center; height: 30px; margin-top: 9px; }
.g-info .legend + .inforow { margin-top: 4px; }
.inforow label { width: 195px; flex: none; text-align: right; font-size: 19.2px; white-space: nowrap; margin-right: 1px; }
.descrow { margin-top: 73px; height: 95px; align-items: flex-start; }
.descrow label { padding-top: 2px; }
.select { display: flex; height: 30px; background: #424242; border: 1px solid #666; border-radius: 3px; overflow: hidden; width: 216px; }
.select.wide { width: 449px; }
.select .val { flex: 1; background: #e2e2e2; color: #111; font-size: 18px; line-height: 28px; padding-left: 11px; white-space: nowrap; }
.select .arrow { width: 28px; flex: none; display: flex; align-items: center; justify-content: center; color: #aaa; }
.select .arrow svg { width: 11px; height: 7px; }
.shortcut { width: 449px; height: 30px; background: #444; border: 1px solid #666; border-radius: 3px; }
.desc { width: 588px; height: 95px; border: 1px solid #5f5f5f; display: flex; justify-content: space-between; }
.desc p { margin: 2px 0 0 4px; font-size: 16px; line-height: 22.3px; white-space: nowrap; color: #ececec; }
.descbar { width: 20px; background: #4b4b4b; display: flex; flex-direction: column; align-items: center; color: #888; flex: none; }
.descbar svg { width: 12px; height: 8px; margin-top: 8px; flex: none; }
.descbar .thumb { width: 16px; height: 36px; margin-top: 4px; border-radius: 8px; background: #6d6d6d; flex: none; }
.descbar .thumb + svg { margin-top: 23px; }
.cellgrid { display: grid; grid-template-columns: 195px 216px 338px 216px; column-gap: 0; row-gap: 9px; margin-top: 3px; align-items: center; }
.cellgrid label { text-align: right; font-size: 19.2px; white-space: nowrap; padding-right: 2px; }
.cellgrid label.lr { padding-right: 0; }
.dlg-foot { flex: none; height: 55px; display: flex; justify-content: space-between; align-items: flex-start; padding: 0 17px 0 18px; font-feature-settings: normal; }
.preview { display: flex; align-items: center; gap: 9px; font-size: 19.5px; padding-top: 1px; color: #e6e6e6; }
.check { width: 17px; height: 17px; border: 1px solid #bbb; border-radius: 2px; background: #424242; }
.btns { display: flex; gap: 16px; }
.btn { width: 141px; height: 39px; border-radius: 20px; background: transparent; border: 1px solid #c8c8c8; color: #f0f0f0; font: 18px "Noto Sans CJK JP", sans-serif; padding: 0; }
.btn.primary { border: 3px solid #fff; }
```
